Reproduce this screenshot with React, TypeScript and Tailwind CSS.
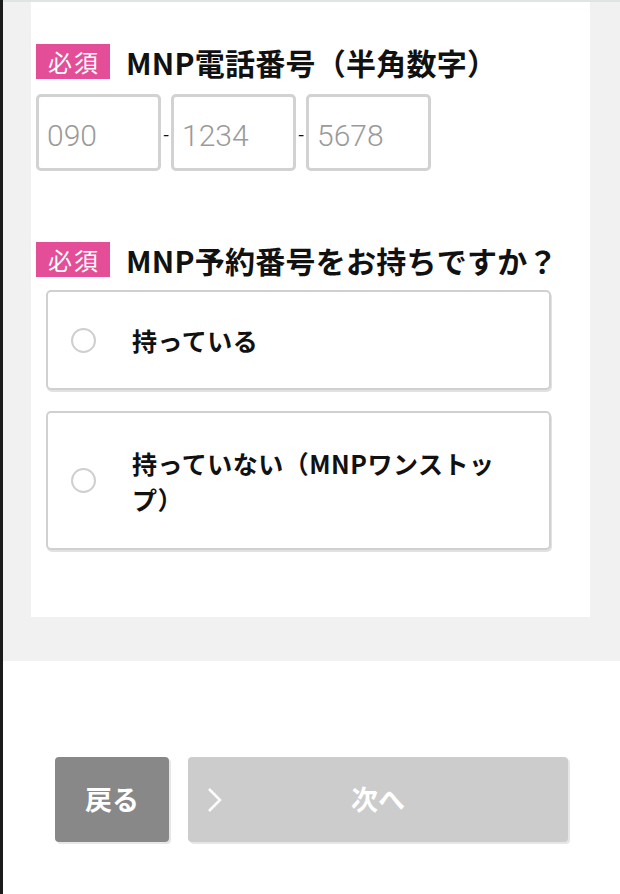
const font = { fontFamily: '"Noto Sans CJK JP", "Noto Sans", sans-serif' };

function Badge() {
  return (
    <span className="flex h-[35px] w-[74px] shrink-0 items-center justify-center bg-[#e44d98] pl-[2px] text-[24px] leading-none tracking-[2px] text-white">
      必須
    </span>
  );
}

function Heading({ children }: { children: React.ReactNode }) {
  return (
    <div className="flex items-center gap-[16px]">
      <Badge />
      <h2 className="text-[30px] font-bold leading-none tracking-[0.25px] text-[#111]">{children}</h2>
    </div>
  );
}

function PhoneBox({ placeholder }: { placeholder: string }) {
  return (
    <input
      placeholder={placeholder}
      className="h-[77px] w-[125px] rounded-[5px] border-[3px] border-[#d2d2d2] bg-white px-[8px] pt-[6px] text-[30px] text-[#333] placeholder:text-[#9a9a9a] outline-none"
      style={{ fontFamily: 'Roboto, "Noto Sans", sans-serif', fontWeight: 300 }}
    />
  );
}

function Option({ label, tall }: { label: React.ReactNode; tall?: boolean }) {
  return (
    <label
      className={`ml-[10px] flex w-[505px] items-center rounded-[5px] border-2 border-[#d0d0d0] bg-white shadow-[1px_2px_0_#e2e2e2] ${tall ? 'h-[139px]' : 'h-[100px]'}`}
    >
      <span className="ml-[23px] h-[25px] w-[25px] shrink-0 rounded-full border-2 border-[#cfcfcf]" />
      <span className="ml-[36px] w-[376px] text-[25px] font-bold leading-[36px] tracking-[0.5px] text-[#111]">{label}</span>
    </label>
  );
}

export default function App() {
  return (
    <div className="flex h-[894px] w-full flex-col border-l-[3px] border-[#1b1b1b] bg-white" style={font}>
      <div className="border-t-2 border-[#dfe5e5] bg-[#f1f1f1] pb-[44px] pl-[28px] pr-[30px]">
        <div className="flex flex-col bg-white pb-[67px] pl-[5px] pt-[42px]">
          <Heading>MNP電話番号（半角数字）</Heading>
          <div className="mt-[15px] flex items-center">
            <PhoneBox placeholder="090" />
            <span className="w-[10px] text-center text-[18px] leading-none text-[#111]">-</span>
            <PhoneBox placeholder="1234" />
            <span className="w-[10px] text-center text-[18px] leading-none text-[#111]">-</span>
            <PhoneBox placeholder="5678" />
          </div>

          <div className="mt-[71px]">
            <Heading>MNP予約番号をお持ちですか？</Heading>
          </div>
          <div className="mt-[13px] flex flex-col gap-[21px]">
            <Option label="持っている" />
            <Option tall label="持っていない（MNPワンストップ）" />
          </div>
        </div>
      </div>

      <div className="flex flex-1 items-start gap-[19px] bg-white pl-[52px] pt-[96px]">
        <button className="flex h-[85px] w-[114px] items-center justify-center rounded-[4px] bg-[#888] text-[27px] font-bold text-white shadow-[2px_2px_0_#e6e6e6]">
          戻る
        </button>
        <button className="relative flex h-[85px] w-[380px] items-center justify-center rounded-[4px] bg-[#cccccc] text-[27px] font-bold text-white shadow-[2px_2px_0_#e6e6e6]">
          <svg className="absolute left-[18px] top-[29px]" width="18" height="28" viewBox="0 0 18 28" fill="none">
            <path d="M3 3 L14 14 L3 25" stroke="white" strokeWidth="2.5" />
          </svg>
          次へ
        </button>
      </div>
    </div>
  );
}
